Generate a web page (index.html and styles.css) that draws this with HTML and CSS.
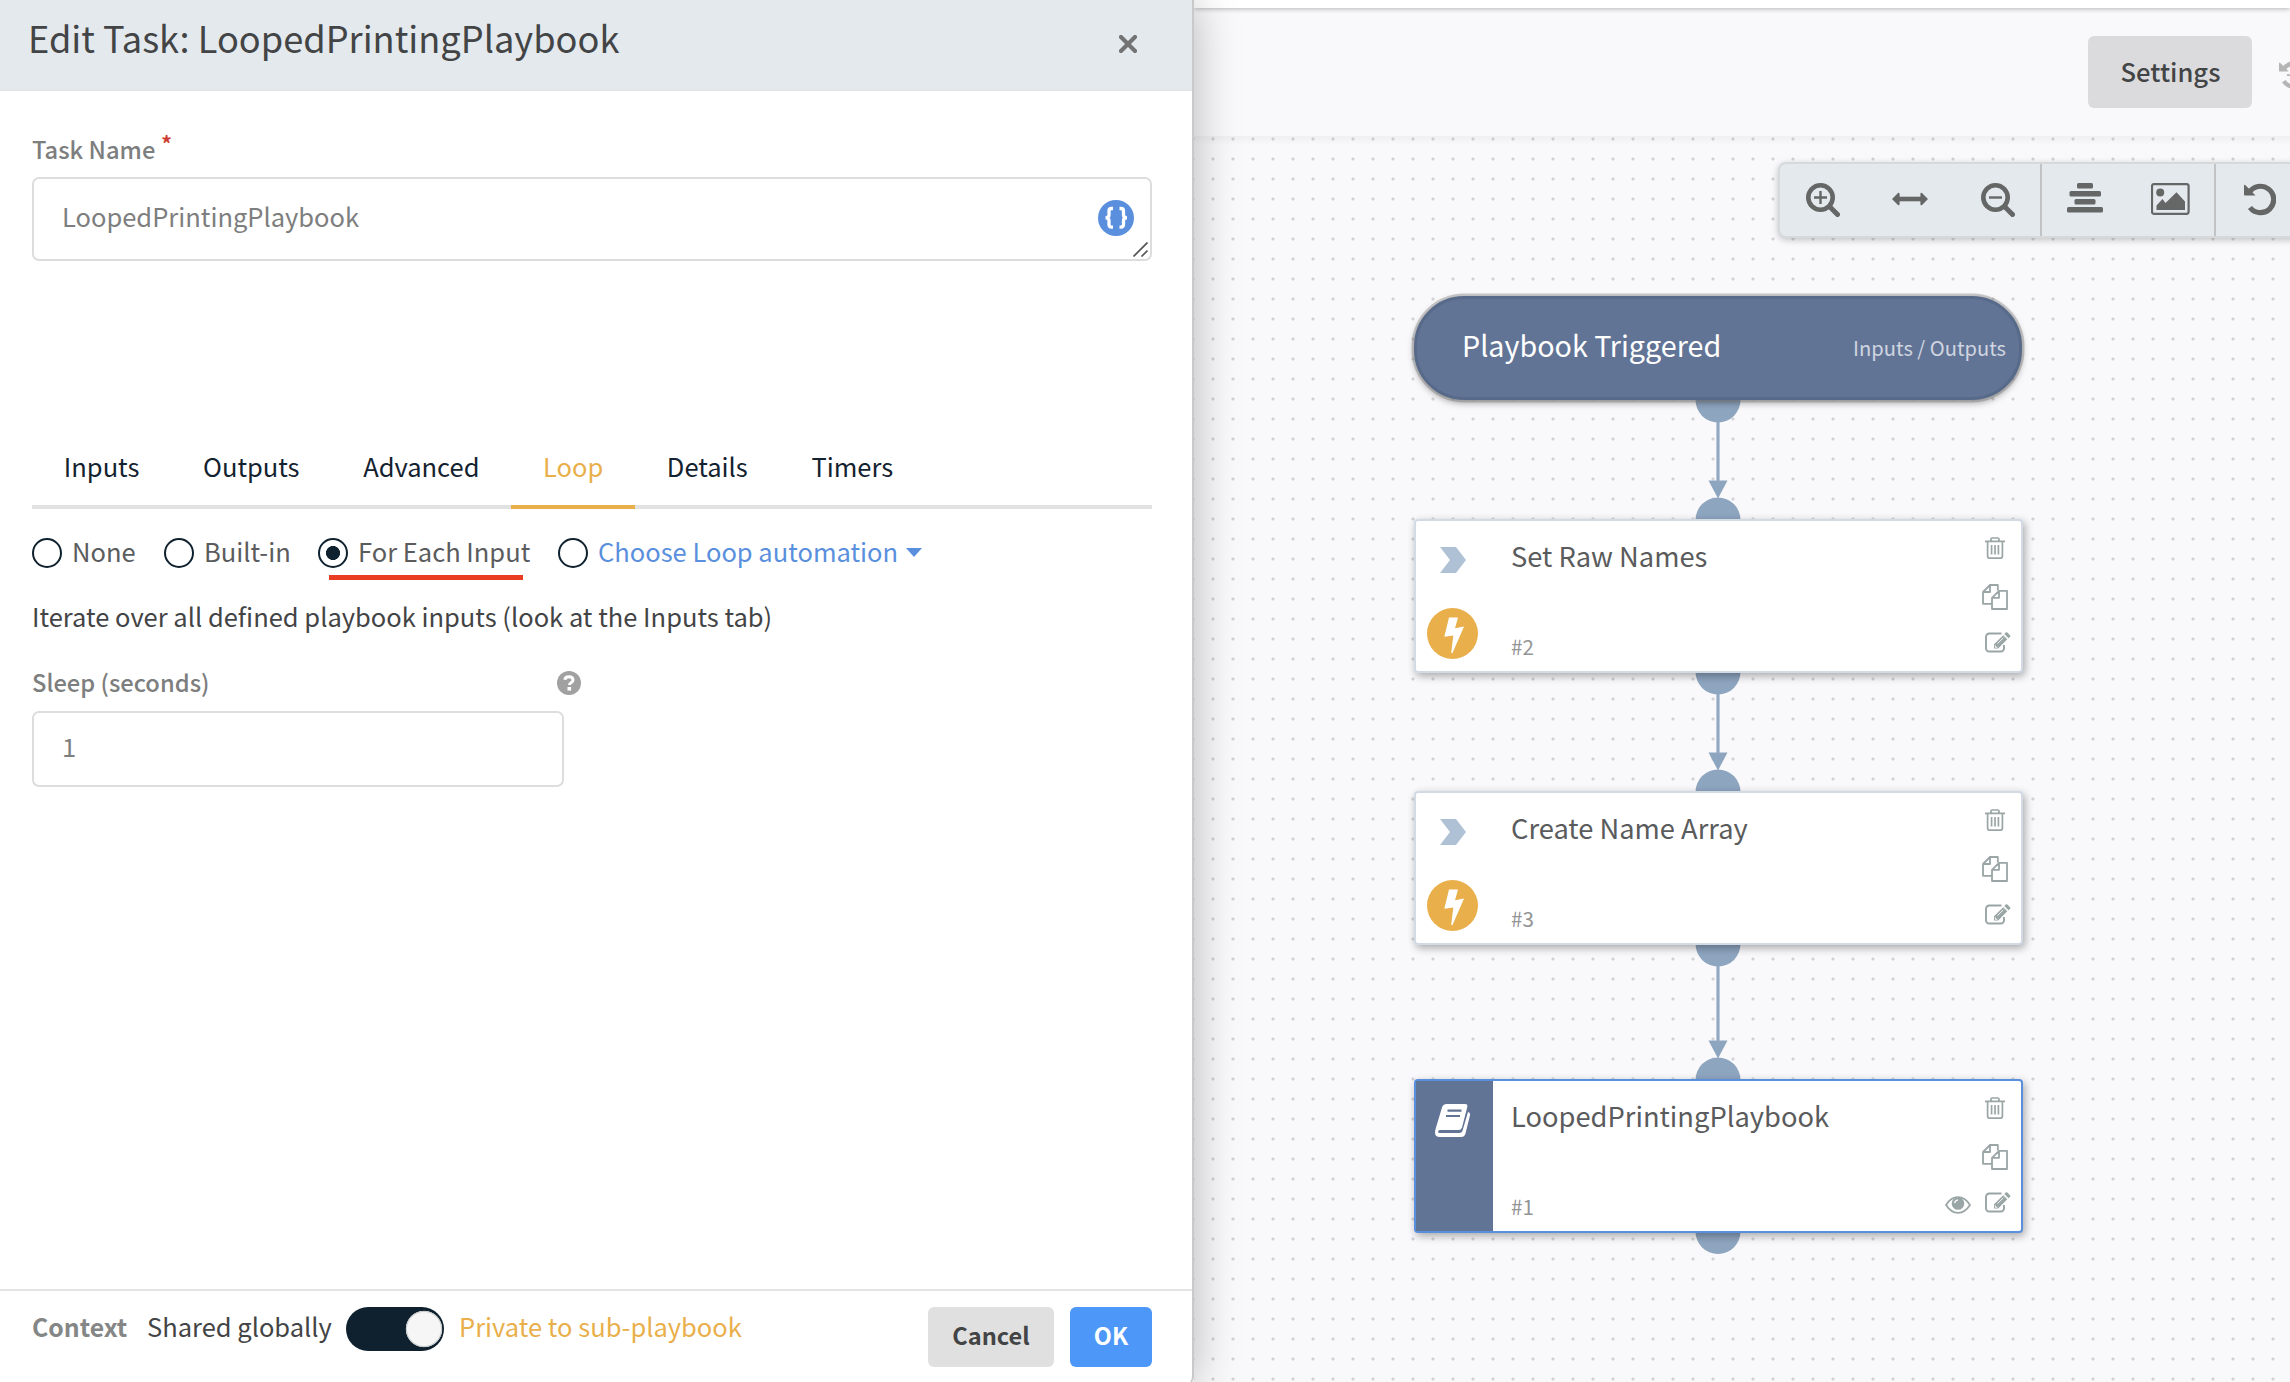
FILE: index.html
```
<!DOCTYPE html>
<html lang="en">
<head>
<meta charset="utf-8">
<title>Edit Task: LoopedPrintingPlaybook</title>
<link rel="stylesheet" href="styles.css">
</head>
<body>
<svg class="sprite" width="0" height="0" aria-hidden="true">
  <symbol id="trash" viewBox="0 0 20 22"><g fill="none" stroke="#9aa5a5" stroke-width="1.7"><path d="M0 4.4h20M6 4V2.2Q6 1 7.200 1h5.600Q14 1 14 2.200V4M2.600 4.600v14.600q0 2 2 2h10.800q2 0 2-2V4.600"/><path d="M6.600 8v9.600M10 8v9.600M13.400 8v9.600"/></g></symbol>
  <symbol id="copy" viewBox="0 0 26 26"><g fill="none" stroke="#9aa5a5" stroke-width="1.800" stroke-linejoin="round"><path d="M10 19.800H1V8L8 1h7.800v5.500M8 1v7H1"/><path d="M17 6.800h8v18.200H10V13.800zM17 6.800v7h-7"/></g></symbol>
  <symbol id="edit" viewBox="0 0 26 21"><path d="M16.500 1.500H4.500q-3.500 0-3.500 3.500v11q0 3.500 3.500 3.500h11q3.500 0 3.500-3.500v-3" fill="none" stroke="#9aa5a5" stroke-width="1.900"/><path d="M9 16.500v-4.200L18.200 3.200l4.100 4.100L13.200 16.500zM19.300 2.100l1.500-1.500q.8-.8 1.600 0l2.600 2.600q.8.8 0 1.600l-1.500 1.500z" fill="#9aa5a5"/><path d="M10.300 13.300v2h2M12.500 11.600l6-6" fill="none" stroke="#fff" stroke-width=".9"/></symbol>
  <symbol id="eye" viewBox="0 0 26 18"><path d="M1 9Q6 1.200 13 1.200T25 9q-5 7.800-12 7.800T1 9z" fill="none" stroke="#9aa5a5" stroke-width="1.800"/><circle cx="13" cy="7.500" r="6.300" fill="#9aa5a5"/><path d="M9.600 7.200q.4-3 3.400-3.400" fill="none" stroke="#fff" stroke-width="1.200"/></symbol>
  <symbol id="chevron" viewBox="0 0 26 26"><path d="M0 0h16l10 13-10 13H0l10-13z" fill="#afc2d5"/></symbol>
  <symbol id="bolt" viewBox="0 0 51 51"><circle cx="25.500" cy="25.500" r="25.500" fill="#e9af4b"/><path d="M22 9.500h9L28 20.300l9-1.700L25.500 45h-1.300L26.300 27.500l-9 1.300z" fill="#fff"/></symbol>
</svg>

<main class="app">
  <section class="panel">
    <header class="panel-head">
      <h1>Edit Task: LoopedPrintingPlaybook</h1>
      <svg class="close" viewBox="0 0 18 18"><path d="M2 2l14 14M16 2L2 16" stroke="#727374" stroke-width="4.200" stroke-linecap="round"/></svg>
    </header>

    <div class="panel-body">
      <div class="label task-label">Task Name<span class="required">*</span></div>
      <div class="field name-field">
        <span>LoopedPrintingPlaybook</span>
        <svg class="braces" viewBox="0 0 36 36"><circle cx="18" cy="18" r="18" fill="#598fdc"/><g fill="none" stroke="#fff" stroke-width="3.300"><path d="M15 8.500h-1.500q-2.500 0-2.500 2.500v4q0 2.800-3.500 2.800 3.500 0 3.500 2.800v4q0 2.500 2.500 2.500H15"/><path d="M21.500 8.500H23q2.500 0 2.500 2.500v4q0 2.800 3.500 2.800-3.500 0-3.500 2.800v4q0 2.500-2.500 2.500h-1.500"/></g></svg>
        <svg class="grip" viewBox="0 0 15 15"><path d="M.5 14.500l14-14M8.500 14.500l6-6" stroke="#555" stroke-width="1.700"/></svg>
      </div>

      <nav class="tabs">
        <a>Inputs</a><a>Outputs</a><a>Advanced</a><a class="active">Loop</a><a>Details</a><a>Timers</a>
      </nav>

      <div class="radios">
        <label><i class="radio"></i><span>None</span></label>
        <label><i class="radio"></i><span>Built-in</span></label>
        <label class="underlined"><i class="radio checked"></i><span>For Each Input</span></label>
        <label><i class="radio"></i><span class="link">Choose Loop automation</span><i class="caret"></i></label>
      </div>

      <p class="hint">Iterate over all defined playbook inputs (look at the Inputs tab)</p>

      <div class="sleep-row">
        <span class="label">Sleep (seconds)</span>
        <svg class="help" viewBox="0 0 24 24"><circle cx="12" cy="12" r="12" fill="#a0a1a0"/><path d="M7.800 8.800Q8.200 5.700 12 5.700q4 0 4 3.300 0 1.700-1.900 2.800-1.600.9-1.600 2.200" fill="none" stroke="#fff" stroke-width="3"/><path d="M10.500 16h3.600v3.600h-3.600z" fill="#fff"/></svg>
      </div>
      <div class="field sleep-field">1</div>
    </div>

    <footer class="panel-foot">
      <div class="context">
        <span class="label context-label">Context</span>
        <span class="shared">Shared globally</span>
        <i class="toggle"></i>
        <span class="private">Private to sub-playbook</span>
      </div>
      <button class="cancel">Cancel</button>
      <button class="ok">OK</button>
    </footer>
  </section>

  <section class="workspace">
    <div class="strip"></div>
    <div class="topbar">
      <button class="settings">Settings</button>
      <svg class="history" viewBox="0 0 32 32"><path d="M5 10A13.200 13.200 0 1 1 5.500 23" fill="none" stroke="#b5b5b6" stroke-width="5"/><path d="M0 3q0-2 1.500-.7L11 12H1q-1 0-1-1z" fill="#b5b5b6"/><path d="M9 16h9V8" fill="none" stroke="#b5b5b6" stroke-width="2"/></svg>
    </div>
    <div class="canvas">
      <div class="toolbar">
        <div class="tools zoom">
          <svg width="34" height="34" viewBox="0 0 34 34"><circle cx="14.500" cy="14.500" r="12.200" fill="none" stroke="#656766" stroke-width="4.600"/><path d="M24 24l7.500 7.500" stroke="#656766" stroke-width="5" stroke-linecap="round"/><path d="M8 14.500h13M14.500 8v13" stroke="#656766" stroke-width="2.400"/></svg>
          <svg class="fit" width="36" height="34" viewBox="0 0 36 34"><path d="M6 16h24" stroke="#656766" stroke-width="4.600"/><path d="M0 16l6-6q1.600-.8 1.600 1v10q0 1.800-1.600 1zM36 16l-6-6q-1.600-.8-1.600 1v10q0 1.800 1.600 1z" fill="#656766"/></svg>
          <svg width="34" height="34" viewBox="0 0 34 34"><circle cx="14.500" cy="14.500" r="12.200" fill="none" stroke="#656766" stroke-width="4.600"/><path d="M24 24l7.500 7.500" stroke="#656766" stroke-width="5" stroke-linecap="round"/><path d="M8 14.500h13" stroke="#656766" stroke-width="2.400"/></svg>
        </div>
        <div class="tools arrange">
          <svg width="36" height="34" viewBox="0 0 36 34"><g fill="#656766"><rect x="10" width="16" height="5.500" rx="1.500"/><rect x="2.500" y="8" width="31.500" height="5.500" rx="1.500"/><rect x="7.500" y="16" width="21" height="5.500" rx="1.500"/><rect y="24" width="36" height="5.500" rx="1.500"/></g></svg>
          <svg width="39" height="34" viewBox="0 0 39 34"><rect x="1" y="1.200" width="36.600" height="29.600" rx="2" fill="none" stroke="#656766" stroke-width="2.200"/><circle cx="9.200" cy="9.400" r="4" fill="#656766"/><path d="M5.500 27v-4.500L11.500 16l3 4L25.500 9.200 34 18.500V27z" fill="#656766"/></svg>
        </div>
        <div class="tools undo">
          <svg width="32" height="34" viewBox="0 0 32 34"><path d="M5 10A13.200 13.200 0 1 1 6 24.500" fill="none" stroke="#656766" stroke-width="5.200"/><path d="M0 3q0-2 1.500-.7L11.500 12.500H1q-1 0-1-1z" fill="#656766"/></svg>
        </div>
      </div>

      <svg class="edges" viewBox="1194 136 1096 1246">
        <g fill="#8ea5c0">
          <circle cx="1718" cy="400" r="22.500"/><circle cx="1718" cy="520" r="22.500"/>
          <circle cx="1718" cy="672" r="22.500"/><circle cx="1718" cy="792" r="22.500"/>
          <circle cx="1718" cy="944" r="22.500"/><circle cx="1718" cy="1080" r="22.500"/>
          <circle cx="1718" cy="1231.500" r="22.500"/>
          <path d="M1708.500 480.500h19l-9.500 18zM1708.500 752.500h19l-9.500 18zM1708.500 1040.500h19l-9.500 18z"/>
        </g>
        <path d="M1718 422v60M1718 694v60M1718 966v76" stroke="#93a9c3" stroke-width="3.200"/>
      </svg>

      <article class="node trigger">
        <span>Playbook Triggered</span><small>Inputs / Outputs</small>
      </article>

      <article class="node card second">
        <div class="kind"><svg class="chevron"><use href="#chevron"/></svg><svg class="bolt"><use href="#bolt"/></svg></div>
        <div class="text"><h2>Set Raw Names</h2><small>#2</small></div>
        <div class="actions"><svg class="trash"><use href="#trash"/></svg><svg class="copy"><use href="#copy"/></svg><svg class="edit"><use href="#edit"/></svg></div>
      </article>

      <article class="node card third">
        <div class="kind"><svg class="chevron"><use href="#chevron"/></svg><svg class="bolt"><use href="#bolt"/></svg></div>
        <div class="text"><h2>Create Name Array</h2><small>#3</small></div>
        <div class="actions"><svg class="trash"><use href="#trash"/></svg><svg class="copy"><use href="#copy"/></svg><svg class="edit"><use href="#edit"/></svg></div>
      </article>

      <article class="node card selected">
        <div class="kind book-side"><svg class="book" viewBox="0 0 36 33"><path d="M11.500 0H30q3 0 2.300 3L27 23.500q-.8 2.500-3.500 2.500H5q-2 0-2 1.500t2 1.500h19.500q2.300 0 3-2.300L33 8q2.500.8 2 3.200L30.500 29.500Q29.500 33 26 33H5Q0 33 0 28.500q0-2 1-5L7 3.500Q8 0 11.500 0z" fill="#fff"/><path d="M12.500 6.600h14M11 12h14" stroke="#627496" stroke-width="2.200"/></svg></div>
        <div class="text"><h2>LoopedPrintingPlaybook</h2><small>#1</small></div>
        <svg class="eye"><use href="#eye"/></svg>
        <div class="actions"><svg class="trash"><use href="#trash"/></svg><svg class="copy"><use href="#copy"/></svg><svg class="edit"><use href="#edit"/></svg></div>
      </article>
    </div>
  </section>
</main>
</body>
</html>
```
FILE: styles.css
```
* { box-sizing: border-box; }
html, body { margin: 0; height: 100%; overflow: hidden; }
body {
  font-family: "Noto Sans CJK SC", "Noto Sans", sans-serif;
  font-size: 25.5px;
  line-height: 36px;
  color: #434445;
  background: #fff;
}
h1, h2, p { margin: 0; font-weight: 400; }
svg { display: block; flex: none; }
button { border: 0; padding: 0; font-family: inherit; border-radius: 6px; }
.sprite { position: absolute; }
.app { display: flex; width: 2290px; height: 1382px; overflow: hidden; }

/* Task panel */
.panel {
  position: relative;
  z-index: 2;
  display: flex;
  flex-direction: column;
  flex: none;
  width: 1194px;
  height: 1385px;
  background: #fff;
  border-right: 2px solid #c8c9ca;
  border-radius: 0 0 9px 0;
  box-shadow: 0 0 46px rgba(0, 0, 0, .27);
}
.panel-head {
  display: flex;
  justify-content: space-between;
  height: 91px;
  padding: 0 55px 0 28px;
  background: #e4e9ed;
  border-bottom: 2px solid #e3e4e4;
}
.panel-head h1 { font-size: 36.2px; line-height: 74px; }
.close { width: 18px; height: 18px; margin-top: 35px; }
.panel-body { flex: 1; padding: 0 40px 0 32px; }
.label { font-size: 23.7px; font-weight: 500; color: #7d7e7e; }
.task-label { display: flex; height: 86px; padding-top: 40px; }
.required { margin: -6px 0 0 6px; font-size: 21px; font-weight: 700; color: #d03a30; }
.field {
  display: flex;
  align-items: center;
  border: 2px solid #dcddde;
  border-radius: 7px;
  color: #7d7e7e;
}
.name-field { height: 84px; padding: 0 2px 6px 28px; }
.braces { width: 36px; height: 36px; margin: 4px 0 0 auto; }
.grip { width: 15px; height: 15px; align-self: flex-end; margin: 0 0 -4px -1px; }
.tabs {
  display: flex;
  height: 82px;
  margin-top: 166px;
  border-bottom: 4px solid #e3e2e2;
  color: #13222f;
}
.tabs a { height: 82px; padding: 0 31.8px; line-height: 78px; }
.tabs .active { color: #e9af4b; border-bottom: 4px solid #e9af4b; }
.radios {
  display: grid;
  grid-template-columns: 132px 154px 240px auto;
  height: 30px;
  margin-top: 28px;
  color: #5b5c5d;
}
.radios label { position: relative; display: flex; align-items: center; white-space: nowrap; }
.radios span { margin: -4px 0 0 10px; }
.radio { flex: none; width: 30px; height: 30px; border: 2px solid #0f212e; border-radius: 50%; }
.checked { background: radial-gradient(circle, #0f212e 6.700px, transparent 7.300px); }
.underlined::after {
  content: "";
  position: absolute;
  left: 11px;
  top: 38px;
  width: 194px;
  height: 5px;
  background: #ea3c23;
}
.radios .link { color: #598fdc; }
.caret {
  margin: -2px 0 0 8px;
  border: 8.500px solid transparent;
  border-top: 9.500px solid #598fdc;
  border-bottom: 0;
}
.hint { margin-top: 31px; line-height: 36px; }
.sleep-row { display: flex; justify-content: space-between; width: 549px; height: 36px; margin-top: 30px; }
.help { width: 24px; height: 24px; margin-top: 7px; }
.sleep-field { width: 532px; height: 76px; margin-top: 11px; padding: 0 28px 7px; }

.panel-foot {
  display: flex;
  align-items: flex-start;
  height: 96px;
  padding: 16px 40px 0 32px;
  border-top: 2px solid #e3e4e4;
}
.context { display: flex; flex: 1; align-items: center; height: 44px; }
.context span { margin-top: -7px; }
.context-label { width: 115px; font-size: 24.800px; font-weight: 700; color: #858686; }
.shared { width: 199px; }
.toggle {
  width: 98px;
  height: 44px;
  margin-right: 15px;
  border-radius: 22px;
  background: radial-gradient(circle at 78px 22px, #f6f6f6 16.500px, #c9cccd 17.500px, #c9cccd 18px, #0f212e 18.600px);
}
.private { color: #e9af4b; }
.cancel, .ok { height: 60px; padding-bottom: 5px; font-size: 23.600px; font-weight: 700; }
.cancel { width: 126px; color: #434445; background: #e0e0e0; }
.ok { width: 82px; margin-left: 16px; color: #fff; background: #4d97f8; }

/* Playbook workspace */
.workspace { display: flex; flex: none; flex-direction: column; width: 1096px; background: #f9f9fb; }
.strip { z-index: 1; height: 8px; background: #fff; box-shadow: 0 1px 5px rgba(0, 0, 0, .28); }
.topbar {
  z-index: 0;
  display: flex;
  align-items: flex-start;
  height: 128px;
  padding: 28px 0 0 894px;
  overflow: hidden;
  background: #f9f9fb;
}
.settings { flex: none; width: 164px; height: 72px; padding: 0 0 3px 1px; font-size: 25.600px; font-weight: 500; color: #434445; background: #dbdbdd; }
.history { width: 28px; height: 28px; margin: 25px 0 0 27px; }
.canvas {
  position: relative;
  flex: 1;
  background:
    linear-gradient(rgba(0, 0, 0, .04), transparent 9px) no-repeat,
    radial-gradient(circle at 10px 10px, #d3d3d5 1.200px, transparent 1.900px) 9px -7px / 20px 20px;
}
.toolbar {
  position: absolute;
  left: 584px;
  top: 26px;
  display: flex;
  width: 560px;
  height: 76px;
  border: 2px solid #d6d9da;
  border-radius: 8px;
  background: #e4e9ed;
  box-shadow: 0 2px 7px rgba(0, 0, 0, .22);
}
.tools { display: flex; justify-content: space-between; padding-top: 19px; border-right: 2px solid #c1c3c4; }
.zoom { width: 262px; padding-left: 26px; padding-right: 25px; }
.fit { margin-right: 2px; }
.arrange { width: 174px; padding-left: 25px; padding-right: 24px; }
.undo { padding-left: 28px; border: 0; }
.edges { position: absolute; inset: 0; width: 1096px; height: 1246px; }

.node { position: absolute; display: flex; }
.trigger {
  left: 220px;
  top: 160px;
  width: 608px;
  height: 104px;
  padding: 28px 13px 0 45px;
  justify-content: space-between;
  border: 3px solid #586a8a;
  border-radius: 50px;
  background: #627496;
  color: #fff;
  font-size: 28.700px;
  box-shadow: 0 0 0 2.500px rgba(120, 120, 120, .38), 0 3px 7px rgba(0, 0, 0, .35);
}
.trigger small { padding-top: 3px; font-size: 20.150px; color: #d0d5e0; }
.card {
  left: 220px;
  width: 609px;
  height: 154px;
  border: 2px solid #d2dae6;
  border-radius: 4px;
  background: #fff;
  box-shadow: 2px 3px 8px rgba(0, 0, 0, .33);
}
.second { top: 383px; }
.third { top: 655px; }
.selected { top: 943px; border-color: #598fdc; }
.kind { width: 77px; }
.chevron { width: 26px; height: 26px; margin: 26px 0 0 24px; }
.bolt { width: 51px; height: 51px; margin: 35px 0 0 11px; }
.book-side { background: #627496; }
.book { width: 36px; height: 33px; margin: 23px 0 0 19px; }
.text { flex: 1; padding: 16px 0 0 18px; }
.text h2 { font-size: 27.300px; color: #5a5b5c; }
.text small { display: block; margin-top: 55px; font-size: 20.600px; color: #939495; }
.actions { width: 44px; }
.trash { width: 20px; height: 22px; margin: 16px 0 0 8px; }
.copy { width: 26px; height: 26px; margin: 25px 0 0 5px; }
.edit { width: 26px; height: 21px; margin: 22px 0 0 8px; }
.eye { width: 26px; height: 18px; margin: 115px 6px 0 0; }
```
